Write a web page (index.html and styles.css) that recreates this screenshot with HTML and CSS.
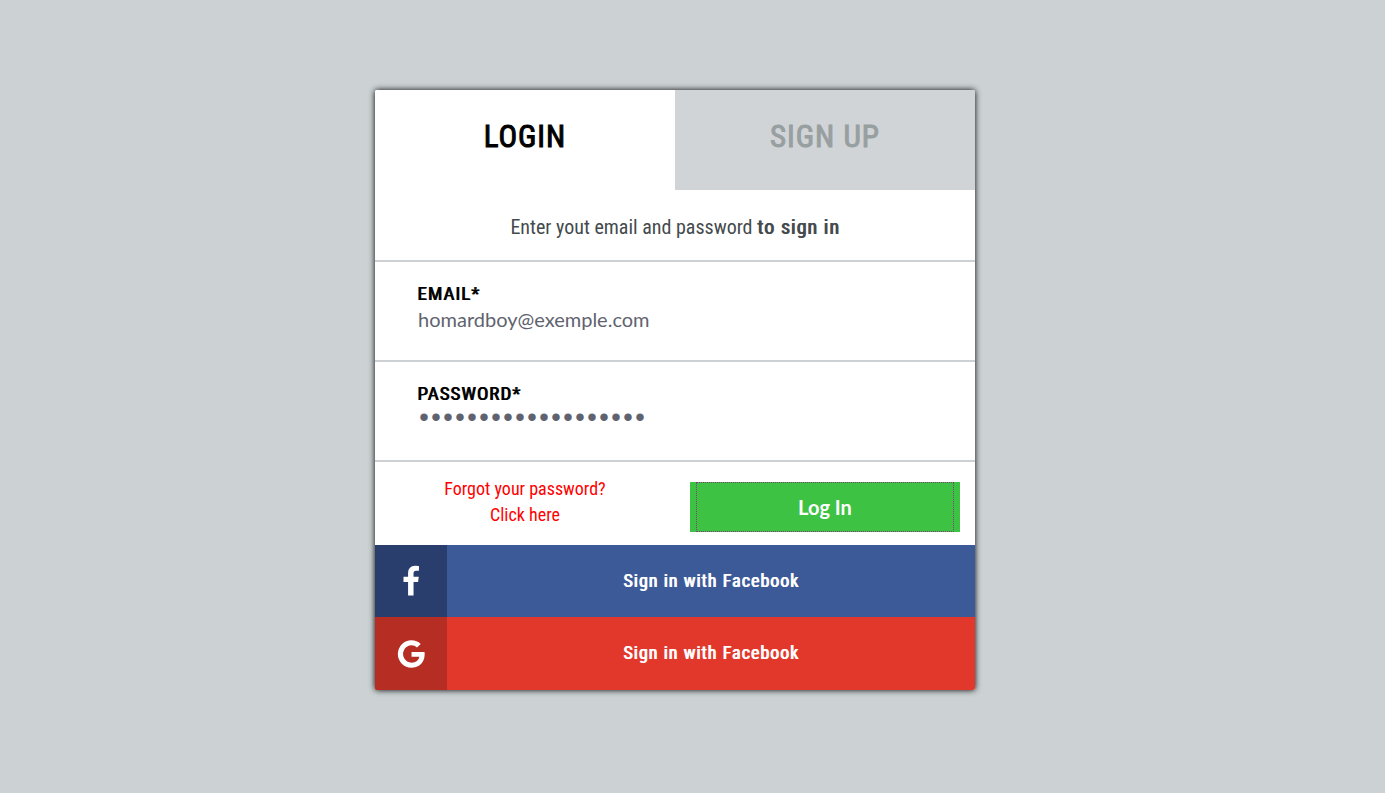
FILE: index.html
```html
<!DOCTYPE html>
<html lang="en">
<head>
<meta charset="utf-8">
<meta name="viewport" content="width=device-width, initial-scale=1">
<title>Login</title>
<link rel="stylesheet" href="styles.css">
</head>
<body>
<main class="page">
  <section class="card">
    <nav class="tabs">
      <button class="tab tab-active" type="button">LOGIN</button>
      <button class="tab" type="button">SIGN UP</button>
    </nav>
    <form class="form">
      <p class="intro">Enter yout email and password <strong>to sign in</strong></p>
      <div class="field">
        <label class="label" for="email">EMAIL*</label>
        <input class="input" id="email" type="email" placeholder="homardboy@exemple.com">
      </div>
      <div class="field">
        <label class="label" for="password">PASSWORD*</label>
        <input class="input input-password" id="password" type="password" placeholder="•••••••••••••••••••">
      </div>
      <div class="actions">
        <a class="forgot" href="#">Forgot your password?<br>Click here</a>
        <button class="submit" type="submit"><span class="focus-ring">Log In</span></button>
      </div>
    </form>
    <a class="social facebook" href="#">
      <span class="social-icon"><svg width="19" height="32" viewBox="30 80 1024 1792" aria-hidden="true"><path fill="currentColor" d="M959 140v264H802q-86 0-116 36t-30 108v189h293l-39 296H656v759H350v-759H95V737h255V519q0-186 104-288.500T731 128q147 0 228 12z"/></svg></span>
      <span class="social-text">Sign in with Facebook</span>
    </a>
    <a class="social google" href="#">
      <span class="social-icon"><svg width="32" height="32" viewBox="-30 0 1792 1792" aria-hidden="true"><path fill="currentColor" d="M896 786h725q12 67 12 128 0 217-91 387.500t-259.500 266.500-386.500 96q-157 0-299-60.500t-245-163.500-163.500-245-60.500-299 60.500-299 163.500-245 245-163.500 299-60.500q300 0 515 201l-209 201q-123-119-306-119-129 0-238.500 65t-173.500 176.500-64 243.500 64 243.500 173.500 176.500 238.500 65q87 0 160-24t120-60 82-82 51.500-87 22.500-78H896V786z"/></svg></span>
      <span class="social-text">Sign in with Facebook</span>
    </a>
  </section>
</main>
</body>
</html>
```
FILE: styles.css
```css
* {
  box-sizing: border-box;
}

body {
  margin: 0;
  background: #ccd2d4;
  font-family: "Roboto Condensed", "Liberation Sans Narrow", Roboto, sans-serif;
}

.page {
  display: flex;
  justify-content: center;
  padding: 90px 35px 90px 0;
}

.card {
  width: 100%;
  max-width: 600px;
  overflow: hidden;
  border-radius: 2px;
  background: #fff;
  box-shadow: 0 0 6px #000;
}

.tabs {
  display: grid;
  grid-template-columns: 1fr 1fr;
}

.tab {
  padding: 23px 0 29px;
  border: 0;
  background: #d0d4d7;
  color: #989fa1;
  font: 400 31px/48px "Roboto Condensed", "Liberation Sans Narrow", Roboto, sans-serif;
  letter-spacing: 1px;
  -webkit-text-stroke: 1px currentColor;
}

.tab-active {
  background: #fff;
  color: #000;
}

.intro {
  margin: 0;
  padding: 24px 0 20px;
  color: #444a4d;
  font-size: 20px;
  line-height: 26px;
  text-align: center;
}

.intro strong {
  font-weight: 400;
  letter-spacing: 1px;
  text-shadow: 1px 0 currentColor;
}

.field {
  display: flex;
  flex-direction: column;
  height: 100px;
  padding: 20px 42px;
  border-top: 2px solid #cdd1d4;
}

.label {
  color: #000;
  font-size: 19px;
  font-weight: 400;
  line-height: 24px;
  letter-spacing: 1px;
  text-shadow: 1px 0 currentColor;
}

.input {
  width: 100%;
  padding: 0 1px;
  border: 0;
  outline: 0;
  background: transparent;
  color: #5f636f;
  font-family: Lato, sans-serif;
  font-size: 20px;
  line-height: 26px;
}

.input-password {
  font-family: "Liberation Mono", monospace;
  -webkit-text-stroke: 2px currentColor;
}

.input::placeholder {
  color: #5f636f;
}

.actions {
  display: grid;
  grid-template-columns: 1fr 1fr;
  border-top: 2px solid #cdd1d4;
}

.forgot {
  padding-top: 14px;
  color: #f00;
  font-size: 18px;
  line-height: 26px;
  text-align: center;
  text-decoration: none;
}

.submit {
  margin: 20px 15px 13px;
  padding: 0 6px;
  border: 0;
  background: #3dc243;
  color: #fff;
  font: 700 20px/48px Lato, sans-serif;
}

.focus-ring {
  display: block;
  border: 1px dotted #7c3f78;
}

.social {
  display: grid;
  grid-template-columns: 72px 1fr;
  height: 72px;
  color: #fff;
  font-size: 18px;
  font-weight: 400;
  line-height: 72px;
  letter-spacing: 1px;
  text-align: center;
  text-decoration: none;
}

.social-text {
  text-shadow: 1px 0 currentColor;
}

.social-icon {
  display: grid;
  place-items: center;
}

.facebook {
  background: #3c5998;
}

.facebook .social-icon {
  background: #293e6d;
}

.google {
  height: 73px;
  background: #e2382c;
}

.google .social-icon {
  background: #b62d23;
}
```
